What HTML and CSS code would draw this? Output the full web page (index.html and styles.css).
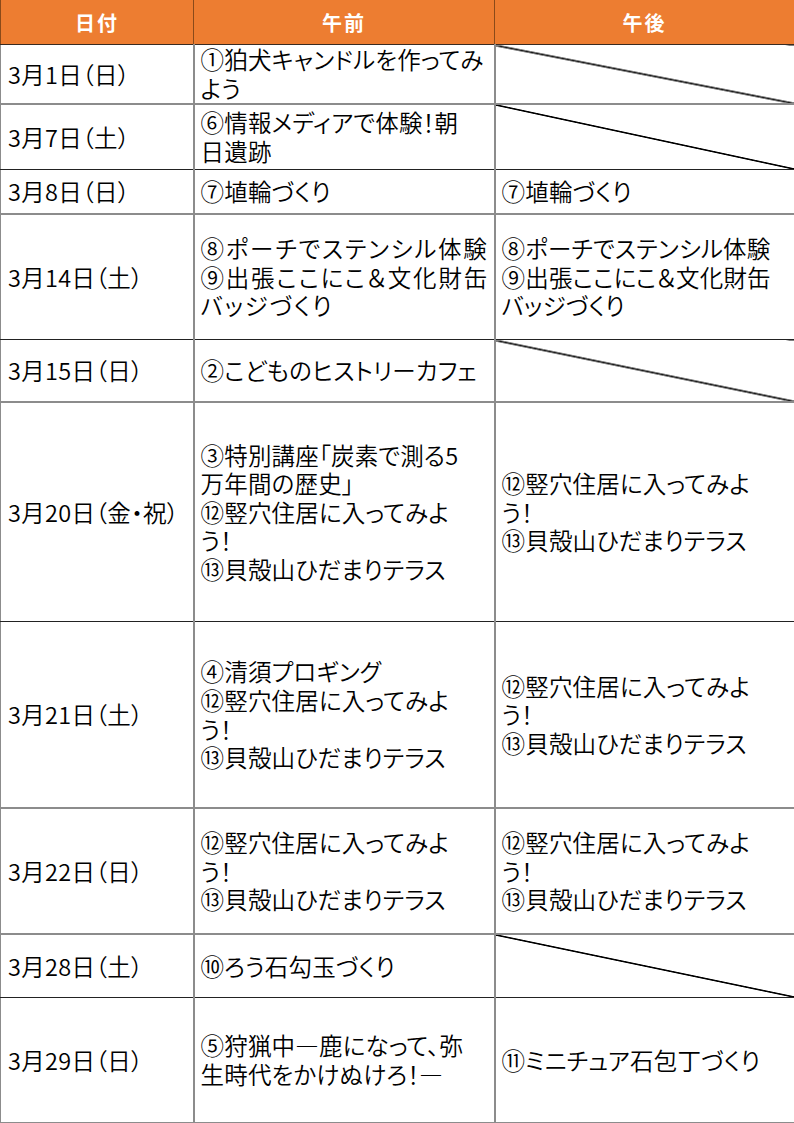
FILE: index.html
```html
<!DOCTYPE html>
<html lang="ja">
<head>
<meta charset="utf-8">
<title>3月イベント</title>
<link rel="stylesheet" href="styles.css">
</head>
<body>
<table class="sched">
  <colgroup>
    <col class="c-date">
    <col class="c-am">
    <col class="c-pm">
  </colgroup>
  <thead>
    <tr class="head">
      <th>日付</th>
      <th>午前</th>
      <th>午後</th>
    </tr>
  </thead>
  <tbody>
    <tr class="r1 b-gray">
      <td class="date">3月1日（日）</td>
      <td>①狛犬キャンドルを作ってみ<br>よう</td>
      <td class="none"></td>
    </tr>
    <tr class="r2 b-dark">
      <td class="date">3月7日（土）</td>
      <td>⑥情報メディアで体験！朝<br>日遺跡</td>
      <td class="none"></td>
    </tr>
    <tr class="r3 b-gray">
      <td class="date">3月8日（日）</td>
      <td>⑦埴輪づくり</td>
      <td>⑦埴輪づくり</td>
    </tr>
    <tr class="r4 b-dark">
      <td class="date">3月14日（土）</td>
      <td class="wide">⑧ポーチでステンシル体験<br>⑨出張ここにこ＆文化財缶<br>バッジづくり</td>
      <td>⑧ポーチでステンシル体験<br>⑨出張ここにこ＆文化財缶<br>バッジづくり</td>
    </tr>
    <tr class="r5 b-gray">
      <td class="date">3月15日（日）</td>
      <td>②こどものヒストリーカフェ</td>
      <td class="none"></td>
    </tr>
    <tr class="r6 b-dark">
      <td class="date">3月20日（金・祝）</td>
      <td>③特別講座「炭素で測る5<br>万年間の歴史」<br>⑫竪穴住居に入ってみよ<br>う！<br>⑬貝殻山ひだまりテラス</td>
      <td>⑫竪穴住居に入ってみよ<br>う！<br>⑬貝殻山ひだまりテラス</td>
    </tr>
    <tr class="r7 b-gray">
      <td class="date">3月21日（土）</td>
      <td>④清須プロギング<br>⑫竪穴住居に入ってみよ<br>う！<br>⑬貝殻山ひだまりテラス</td>
      <td>⑫竪穴住居に入ってみよ<br>う！<br>⑬貝殻山ひだまりテラス</td>
    </tr>
    <tr class="r8 b-gray">
      <td class="date">3月22日（日）</td>
      <td>⑫竪穴住居に入ってみよ<br>う！<br>⑬貝殻山ひだまりテラス</td>
      <td>⑫竪穴住居に入ってみよ<br>う！<br>⑬貝殻山ひだまりテラス</td>
    </tr>
    <tr class="r9 b-dark">
      <td class="date">3月28日（土）</td>
      <td>⑩ろう石勾玉づくり</td>
      <td class="none"></td>
    </tr>
    <tr class="r10 b-gray">
      <td class="date">3月29日（日）</td>
      <td>⑤狩猟中—鹿になって、弥<br>生時代をかけぬけろ！—</td>
      <td>⑪ミニチュア石包丁づくり</td>
    </tr>
  </tbody>
</table>
</body>
</html>
```

FILE: styles.css
```css
html, body {
  margin: 0;
  padding: 0;
  background: #ffffff;
}

.sched {
  border-collapse: collapse;
  table-layout: fixed;
  width: 794px;
  font-family: "Noto Sans CJK JP", "Noto Sans", sans-serif;
  color: #000000;
}

.c-date { width: 193px; }
.c-am { width: 301px; }
.c-pm { width: 300px; }

.head th {
  height: 44px;
  padding: 0;
  background: #ed7d31;
  color: #ffffff;
  font-size: 20px;
  font-weight: 700;
  letter-spacing: 2px;
  text-align: center;
  vertical-align: middle;
  border-left: 1px solid #8a4a1a;
  border-right: 1px solid #8a4a1a;
  border-bottom: 1px solid #3a2a20;
}

.sched td {
  padding: 0 2px 0 6px;
  font-size: 23.5px;
  font-weight: 350;
  font-feature-settings: "palt" 1;
  line-height: 28.6px;
  letter-spacing: 0.2px;
  white-space: nowrap;
  vertical-align: middle;
  text-align: left;
  border-left: 2px solid #8c8c8c;
  border-right: 2px solid #8c8c8c;
}

.sched td.wide {
  letter-spacing: 1.8px;
}

.sched td.date {
  padding-left: 7px;
  letter-spacing: 0.3px;
  border-left: 1px solid #8c8c8c;
}

.sched td:last-child {
  border-right: 1px solid #8c8c8c;
}

.b-gray td { border-bottom: 2px solid #8c8c8c; }
.b-dark td { border-bottom: 1px solid #222222; }

.sched td.none {
  background: linear-gradient(to top right,
    transparent calc(50% - 1.2px),
    #000000 calc(50% - 0.4px),
    #000000 calc(50% + 0.4px),
    transparent calc(50% + 1.2px));
}

.r1 td { height: 58px; }
.r2 td { height: 64px; }
.r3 td { height: 43px; }
.r4 td { height: 124px; }
.r5 td { height: 61px; }
.r6 td { height: 218px; }
.r7 td { height: 185px; }
.r8 td { height: 124px; }
.r9 td { height: 62px; }
.r10 td { height: 124px; }
```
